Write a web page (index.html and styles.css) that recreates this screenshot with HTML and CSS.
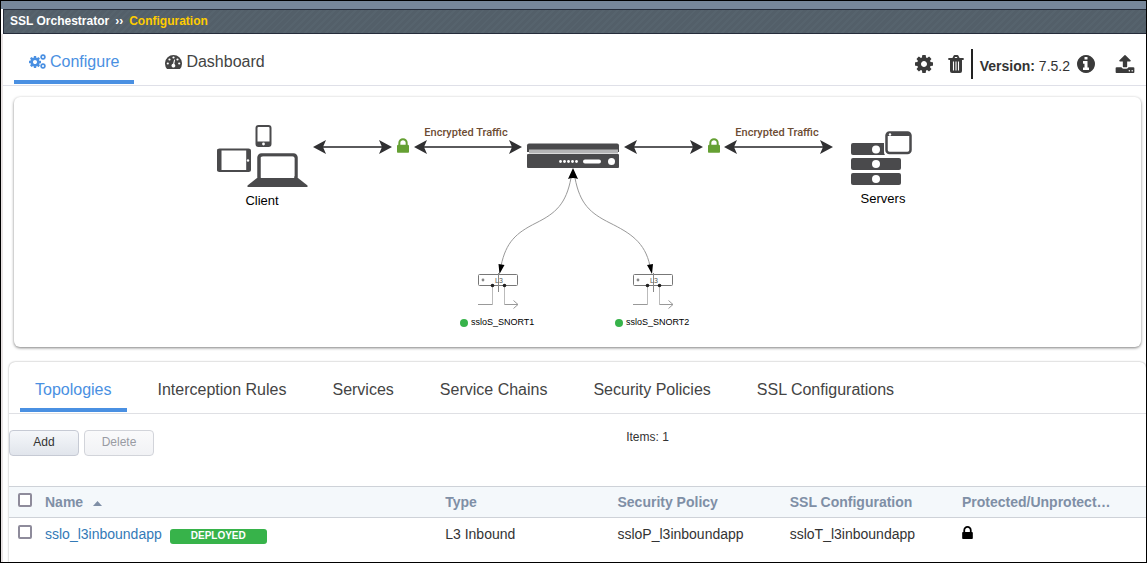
FILE: index.html
```html
<!DOCTYPE html>
<html lang="en">
<head>
<meta charset="utf-8">
<title>SSL Orchestrator - Configuration</title>
<link rel="stylesheet" href="styles.css">
</head>
<body>
<svg class="sprite" aria-hidden="true">
  <symbol id="cog" viewBox="128 128 1536 1536"><path d="M1152 896q0-106-75-181t-181-75-181 75-75 181 75 181 181 75 181-75 75-181zm512-109v222q0 12-8 23t-20 13l-185 28q-19 54-39 91 35 50 107 138 10 12 10 25t-9 23q-27 37-99 108t-94 71q-12 0-26-9l-138-108q-44 23-91 38-16 136-29 186-7 28-36 28h-222q-14 0-24.500-8.500t-11.500-21.500l-28-184q-49-16-90-37l-141 107q-10 9-25 9-14 0-25-11-126-114-165-168-7-10-7-23 0-12 8-23 15-21 51-66.500t54-70.500q-27-50-41-99l-183-27q-13-2-21-12.500t-8-23.500v-222q0-12 8-23t19-13l186-28q14-46 39-92-40-57-107-138-10-12-10-24 0-10 9-23 26-36 98.500-107.500t94.500-71.500q13 0 26 10l138 107q44-23 91-38 16-136 29-186 7-28 36-28h222q14 0 24.500 8.500t11.500 21.500l28 184q49 16 90 37l142-107q9-9 24-9 13 0 25 10 129 119 165 170 7 8 7 22 0 12-8 23-15 21-51 66.500t-54 70.500q26 50 41 98l183 28q13 2 21 12.500t8 23.500z"/></symbol>
  <symbol id="lock" viewBox="320 128 1152 1408"><path d="M640 768h512v-192q0-106-75-181t-181-75-181 75-75 181v192zm832 96v576q0 40-28 68t-68 28h-960q-40 0-68-28t-28-68v-576q0-40 28-68t68-28h32v-192q0-184 132-316t316-132 316 132 132 316v192h32q40 0 68 28t28 68z"/></symbol>
  <symbol id="service" viewBox="0 0 46 40">
    <rect x="3.500" y="3.500" width="39" height="11" rx="1" fill="#fff" stroke="#777"/>
    <circle cx="8" cy="9" r="1.400" fill="#888"/>
    <path d="M23.500 2v19" stroke="#888" fill="none"/>
    <path d="M17.500 15v18.500M29.500 15v18.500" stroke="#bbb" fill="none"/>
    <path d="M3 33.500h14.500M29.500 33.500H43M38.500 29.500l4.500 4-4.500 4" stroke="#999" fill="none"/>
    <circle cx="17.500" cy="14.500" r="1.800" fill="#222"/><circle cx="29.500" cy="14.500" r="1.800" fill="#222"/>
  </symbol>
  <symbol id="head" viewBox="0 0 13 14"><path d="M0 7 13 0 10 7 13 14z" fill="#303032"/></symbol>
</svg>
<div class="frame">
  <div class="topstrip"></div>
  <nav class="crumbs" aria-label="Breadcrumb"><span>SSL Orchestrator</span><span class="sep">››</span><span class="current">Configuration</span></nav>
  <main class="main">
    <header class="header">
      <nav class="tabs">
        <a class="tab active" href="#configure">
          <svg class="tab-icon" viewBox="0 0 17 17"><use href="#cog" x="0" y="3" width="12" height="12"/><use href="#cog" x="11" y="1" width="6" height="6"/><use href="#cog" x="11" y="10" width="6" height="6"/></svg>Configure</a>
        <a class="tab" href="#dashboard">
          <svg class="tab-icon" viewBox="0 0 17 17"><path d="M2 16A8.500 8.500 0 1 1 15 16z"/><g fill="#fff"><circle cx="2.800" cy="10.500" r="1.100"/><circle cx="4.500" cy="6.500" r="1.100"/><circle cx="8.500" cy="4.500" r="1.100"/><circle cx="12.500" cy="6.500" r="1.100"/><circle cx="14.200" cy="10.500" r="1.100"/><path d="M9.100 6.500l1 .2-.8 4.300a1.900 1.900 0 1 1-1.200-.2z"/></g></svg>Dashboard</a>
      </nav>
      <div class="tools">
        <button class="tool settings" aria-label="Settings"><svg width="18" height="18"><use href="#cog"/></svg></button>
        <button class="tool" aria-label="Delete configuration"><svg width="16" height="18" viewBox="0 0 16 18"><path d="M1 4h14M5 4l1.500-3h3L11 4" fill="none" stroke="#3a3a3a" stroke-width="1.800" stroke-linejoin="round" stroke-linecap="round"/><path d="M2 4h12v12q0 2-2 2H4q-2 0-2-2z"/><path d="M5.500 6.500v9M8 6.500v9M10.500 6.500v9" stroke="#fff" stroke-width="1.100"/></svg></button>
        <div class="version"><b>Version:</b> 7.5.2</div>
        <button class="tool info" aria-label="Version information"><svg width="18" height="18" viewBox="128 128 1536 1536"><path d="M1152 1376v-160q0-14-9-23t-23-9h-96v-512q0-14-9-23t-23-9h-320q-14 0-23 9t-9 23v160q0 14 9 23t23 9h96v320h-96q-14 0-23 9t-9 23v160q0 14 9 23t23 9h448q14 0 23-9t9-23zm-128-896v-160q0-14-9-23t-23-9h-192q-14 0-23 9t-9 23v160q0 14 9 23t23 9h192q14 0 23-9t9-23zm640 416q0 209-103 385.500t-279.500 279.500-385.500 103-385.500-103-279.500-279.500-103-385.500 103-385.500 279.500-279.500 385.500-103 385.500 103 279.500 279.500 103 385.500z"/></svg></button>
        <button class="tool" aria-label="Upload"><svg width="20" height="18" viewBox="64 64 1664 1600"><path d="M1344 1472q0-26-19-45t-45-19-45 19-19 45 19 45 45 19 45-19 19-45zm256 0q0-26-19-45t-45-19-45 19-19 45 19 45 45 19 45-19 19-45zm128-224v320q0 40-28 68t-68 28h-1472q-40 0-68-28t-28-68v-320q0-40 28-68t68-28h427q21 56 70.500 92t110.500 36h256q61 0 110.500-36t70.500-92h427q40 0 68 28t28 68zm-325-648q-17 40-59 40h-256v448q0 26-19 45t-45 19h-256q-26 0-45-19t-19-45v-448h-256q-42 0-59-40-17-39 14-69l448-448q18-19 45-19t45 19l448 448q31 30 14 69z"/></svg></button>
      </div>
    </header>

    <section class="diagram">
      <svg class="canvas" viewBox="14 97 1127 250" role="img" aria-label="Topology from client to servers">
        <!-- client devices -->
        <g fill="#fff" stroke="#4a4a4c">
          <rect x="256.500" y="126" width="14" height="20" rx="2" stroke-width="2"/>
          <path d="M257 143.500h13" stroke-width="4"/>
          <rect x="218" y="149.500" width="32" height="21.500" rx="1.500" stroke-width="2"/>
          <path d="M219.500 149v22M248.200 149v22" stroke-width="4"/>
          <rect x="259" y="155" width="37" height="25" rx="2.500" stroke-width="3.500"/>
        </g>
        <path d="M257 178h41l9.500 7.500v1.500h-60v-1.500z" fill="#4a4a4c"/>
        <rect x="261" y="156.500" width="33.500" height="21" rx="2" fill="#fff"/>
        <circle cx="263.500" cy="144" r="1.400" fill="#fff"/><circle cx="248" cy="160.500" r="1.200" fill="#fff"/>
        <text class="node" x="262" y="205">Client</text>
        <!-- traffic links -->
        <g stroke="#5a5a5c" stroke-width="2"><path d="M322 147h62M423 147h90M633 147h62M734 147h90"/></g>
        <g fill="#303032">
          <use href="#head" x="313" y="140" width="13" height="14"/><use href="#head" x="414" y="140" width="13" height="14"/>
          <use href="#head" x="624" y="140" width="13" height="14"/><use href="#head" x="724" y="140" width="13" height="14"/>
          <path d="M392 147l-13-7 3 7-3 7zM522 147l-13-7 3 7-3 7zM703 147l-13-7 3 7-3 7zM833 147l-13-7 3 7-3 7z"/>
        </g>
        <g fill="#65a033"><use href="#lock" x="397" y="138" width="12" height="15"/><use href="#lock" x="708" y="138" width="12" height="15"/></g>
        <text class="link" x="466" y="136">Encrypted Traffic</text>
        <text class="link" x="777" y="136">Encrypted Traffic</text>
        <!-- appliance -->
        <path d="M527 152v-6.500q0-2 2-2h88q2 0 2 2v6.500z" fill="#4a4a4c"/>
        <path d="M529 149.500h89v4h-89z" fill="#b5b5b6"/>
        <rect x="527" y="154" width="92" height="14" rx="1" fill="#4a4a4c"/>
        <g fill="#fff"><circle cx="560.500" cy="161.500" r="1.400"/><circle cx="564.500" cy="161.500" r="1.400"/><circle cx="568.500" cy="161.500" r="1.400"/><circle cx="572.500" cy="161.500" r="1.400"/><circle cx="576.500" cy="161.500" r="1.400"/><rect x="583" y="159.500" width="18" height="4" rx="2"/><circle cx="611.500" cy="161.500" r="3.500"/></g>
        <!-- servers -->
        <g fill="#4a4a4c"><rect x="851" y="143" width="50" height="12" rx="2"/><rect x="851" y="158" width="50" height="12" rx="2"/><rect x="851" y="173" width="50" height="12" rx="2"/></g>
        <g fill="#fff"><circle cx="876" cy="149.500" r="4"/><circle cx="876" cy="164" r="4"/><circle cx="876" cy="179" r="4"/>
          <rect x="884" y="130" width="29" height="26" rx="4"/></g>
        <rect x="886.500" y="132.500" width="24" height="20.500" rx="3" fill="#fff" stroke="#4a4a4c" stroke-width="2.500"/>
        <path d="M887 134.500h23" stroke="#4a4a4c" stroke-width="3"/><circle cx="890" cy="134.500" r="1.200" fill="#fff"/>
        <text class="node" x="883" y="203">Servers</text>
        <!-- inline services -->
        <g fill="none" stroke="#999"><path d="M571 178C566 204 556 213 536 223S506 242 501 266M575 178C580 204 590 213 610 223S645 242 650 266"/></g>
        <path d="M573 168l5 11q-5-2-10 0zM499.500 274l-1-10 6 1zM652 274l-5-9 6-1z"/>
        <use href="#service" x="475" y="271" width="46" height="40"/>
        <use href="#service" x="630" y="271" width="46" height="40"/>
        <text class="chip" x="495" y="283">L3</text><text class="chip" x="650" y="283">L3</text>
        <circle cx="464" cy="323" r="4" fill="#37b34a"/><circle cx="619" cy="323" r="4" fill="#37b34a"/>
        <text class="service" x="471" y="325">ssloS_SNORT1</text>
        <text class="service" x="626" y="325">ssloS_SNORT2</text>
      </svg>
    </section>

    <section class="panel">
      <nav class="tabs panel-tabs">
        <a class="tab active" href="#topologies">Topologies</a>
        <a class="tab" href="#rules">Interception Rules</a>
        <a class="tab" href="#services">Services</a>
        <a class="tab" href="#chains">Service Chains</a>
        <a class="tab" href="#policies">Security Policies</a>
        <a class="tab" href="#ssl">SSL Configurations</a>
      </nav>
      <div class="actions">
        <button class="btn">Add</button>
        <button class="btn" disabled>Delete</button>
        <div class="count">Items: 1</div>
      </div>
      <table class="grid">
        <colgroup><col class="c-check"><col class="c-name"><col class="c-mid"><col class="c-mid"><col class="c-mid"><col></colgroup>
        <thead><tr>
          <th><input class="check" type="checkbox" aria-label="Select all"></th>
          <th>Name <svg class="sort" width="9" height="5" viewBox="0 0 9 5"><path d="M0 5 4.500 0 9 5z"/></svg></th>
          <th>Type</th><th>Security Policy</th><th>SSL Configuration</th><th>Protected/Unprotect…</th>
        </tr></thead>
        <tbody><tr>
          <td><input class="check" type="checkbox" aria-label="Select sslo_l3inboundapp"></td>
          <td><div class="name"><a href="#app">sslo_l3inboundapp</a><span class="badge">DEPLOYED</span></div></td>
          <td>L3 Inbound</td><td>ssloP_l3inboundapp</td><td>ssloT_l3inboundapp</td>
          <td><svg class="lock" width="11" height="13" role="img" aria-label="Protected"><use href="#lock"/></svg></td>
        </tr></tbody>
      </table>
    </section>
  </main>
</div>
</body>
</html>
```
FILE: styles.css
```css
* { box-sizing: border-box; }
body {
  margin: 0;
  font-family: "Liberation Sans", Arial, sans-serif;
  font-size: 14px;
  color: #333;
  background: #fff;
}
.sprite { position: absolute; width: 0; height: 0; }
.frame {
  min-height: 100vh;
  border: 1px solid #000;
  display: flex;
  flex-direction: column;
}
.topstrip { height: 8px; background: #77879a; }
.crumbs {
  display: flex;
  align-items: center;
  gap: 6px;
  height: 25px;
  margin-left: 2px;
  padding: 0 6px 1px;
  border: 1px solid #262d3b;
  border-right: 0;
  background: repeating-linear-gradient(135deg, #535f69 0 3px, #56636d 3px 5px);
  color: #fff;
  font-size: 12px;
  font-weight: bold;
}
.crumbs .current { color: #fc0; }
.main {
  flex: 1;
  display: flex;
  flex-direction: column;
  border-left: 2px solid #e9e4e4;
}
.header {
  display: flex;
  justify-content: space-between;
  padding: 1px 11px 1px 11px;
  border-bottom: 1px solid #dfe0e8;
}
.tabs { display: flex; gap: 16px; }
.tab {
  display: flex;
  align-items: center;
  gap: 4px;
  padding: 16px 15px 8px;
  border-bottom: 4px solid transparent;
  font-size: 16px;
  line-height: 21px;
  color: #444;
  text-decoration: none;
  white-space: nowrap;
}
.tab.active { color: #4a90e2; border-color: #4a90e2; }
.tab-icon { width: 17px; height: 17px; fill: currentColor; }
.tools { display: flex; align-items: center; padding-top: 8px; }
.tool {
  display: flex;
  margin: 0;
  padding: 0;
  border: 0;
  background: none;
  fill: #3a3a3a;
}
.settings { margin-right: 15px; }
.version {
  margin-left: 7px;
  padding: 9px 7px 5px;
  border-left: 2px solid #222;
  line-height: 16px;
}
.info { margin-right: 20px; }
.diagram {
  margin: 11px 5px 0 11px;
  border-radius: 6px;
  box-shadow: 0 1px 3px rgba(0, 0, 0, 0.5);
}
.canvas { display: block; width: 100%; min-height: 250px; }
.canvas text { font-family: "Liberation Sans", Arial, sans-serif; }
.canvas .node { font-size: 13px; text-anchor: middle; fill: #000; }
.canvas .link { font-family: Roboto, sans-serif; font-size: 11px; font-weight: 500; text-anchor: middle; fill: #6d4c33; }
.canvas .service { font-size: 9px; fill: #000; }
.canvas .chip { font-size: 7px; fill: #555; }
.panel {
  flex: 1;
  margin: 15px 0 0 6px;
  border-radius: 6px 6px 0 0;
  box-shadow: 0 0 2px rgba(0, 0, 0, 0.4);
}
.panel-tabs { padding: 1px 11px; border-bottom: 1px solid #dfe0e4; }
.actions { display: flex; gap: 5px; padding: 16px 10px 30px 0; }
.btn {
  width: 70px;
  height: 26px;
  padding: 0 0 2px;
  border: 1px solid #c6cad4;
  border-radius: 4px;
  background: linear-gradient(#f5f7fa, #e1e5ec);
  color: #333;
  font: 12px "Liberation Sans", Arial, sans-serif;
}
.btn:disabled { background: linear-gradient(#fafafb, #f1f2f5); color: #999ba3; border-color: #d2d4da; }
.count { flex: 1; text-align: center; font-size: 12px; line-height: 14px; }
.grid { width: 100%; table-layout: fixed; border-collapse: collapse; }
.c-check { width: 29px; }
.c-name { width: 35.2%; }
.c-mid { width: 15.15%; }
.grid th, .grid td {
  height: 31px;
  padding: 0 7px;
  text-align: left;
  white-space: nowrap;
}
.grid td { padding-top: 1px; }
.grid th {
  background: #f4f8fb;
  border: solid #ced2d8;
  border-width: 1px 0;
  color: #7f8fa6;
}
.sort { margin: 0 0 1px 6px; fill: #7f8fa6; }
.check {
  appearance: none;
  display: block;
  width: 14px;
  height: 14px;
  margin: 0 0 4px 2px;
  border: 2px solid #8e8b9b;
  border-radius: 2px;
  background: #fff;
}
.name { display: flex; align-items: center; gap: 8px; }
.name a { color: #337ab7; text-decoration: none; }
.badge {
  min-width: 97px;
  height: 15px;
  margin-top: 5px;
  border-radius: 3px;
  background: #37b34a;
  color: #fff;
  font-size: 10px;
  font-weight: bold;
  line-height: 13px;
  text-align: center;
}
.lock { display: block; margin-bottom: 3px; fill: #000; }
```
